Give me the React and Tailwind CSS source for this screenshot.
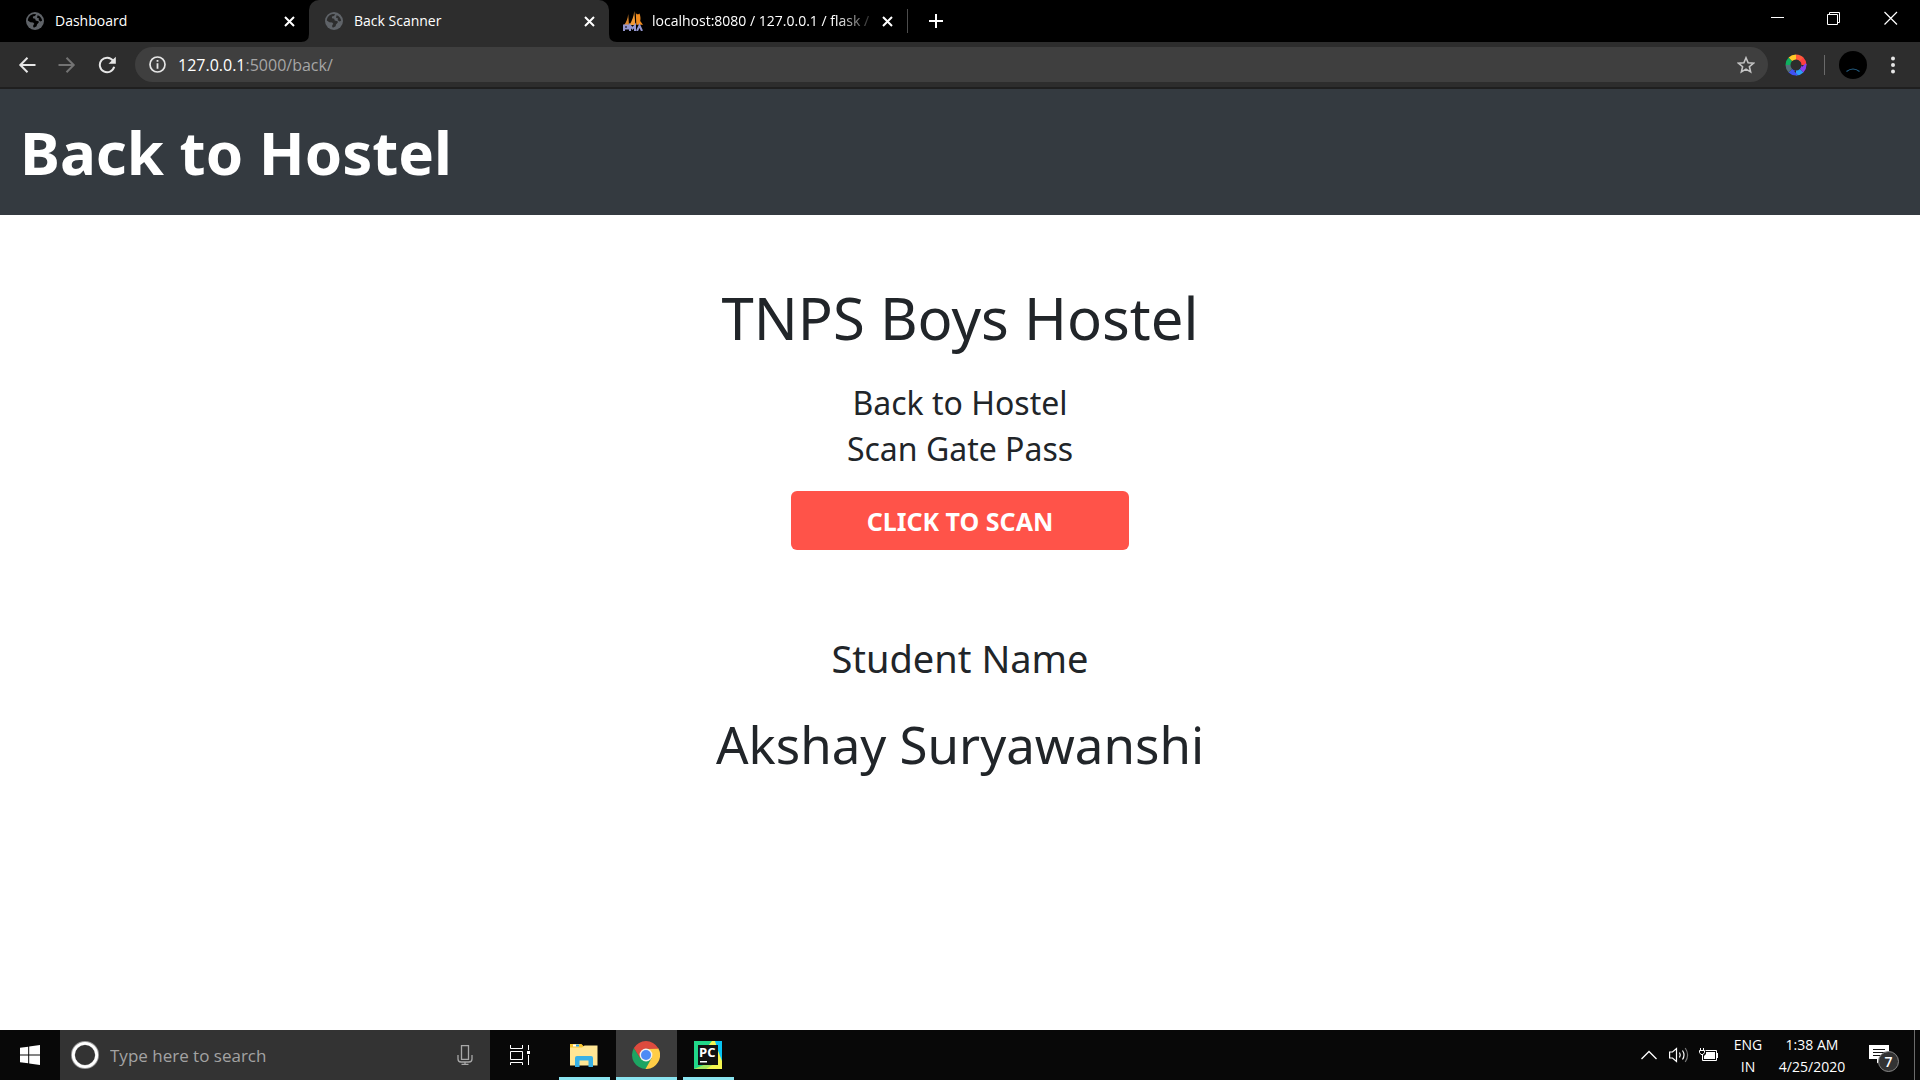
import React from "react";

const uiFont = "font-['Open_Sans','Noto_Sans',sans-serif]";

function Globe({ land }) {
  return (
    <svg className="size-[18px] shrink-0" viewBox="0 0 18 18" aria-hidden="true">
      <circle cx="9" cy="9" r="9" fill="#5f6368" />
      <path d="M1.8 8.6C2 5 4.6 2.3 8 1.9L10.2 2.2 9 3.9 6.9 4.6 7 6.2 9.2 6.7 9.7 8.6 12.6 9.2 12.8 10.6 11 12.4 10.6 14.2 8.4 15.4 7.2 15.2 7.3 13 8.4 12 7.2 10.4 4.4 10.2Z" fill={land} />
      <path d="M11.6 3.2C14.2 4 15.9 6.2 16.1 8.8L14.4 9.6 12.6 7.9 13.1 6.6 11 5.8Z" fill={land} />
    </svg>
  );
}

function Sails() {
  return (
    <svg className="size-5 shrink-0" viewBox="0 0 20 20" aria-hidden="true">
      <path d="M5.200 3 6 14H1C3.500 11 4.800 7.500 5.200 3Z" fill="#d9842b" />
      <path d="M11.300 0 12.300 14H6.300C9 10 10.800 5.500 11.300 0Z" fill="#f29a35" />
      <path d="M12.800 1.500C13.500 3.500 14.500 4 16.500 2.500 17.500 5 17.800 8 17.200 10L20 13.800H13.300Z" fill="#f08a1c" />
      <path d="M1 20V14.500H5V17.500H1.500M7 20V14.500L9.500 17.500 12 14.500V20M14 20 16.500 14.500 19 20" fill="none" stroke="#9396cf" strokeWidth="2" />
    </svg>
  );
}

function CloseButton({ label }) {
  return (
    <button aria-label={label} className="flex size-5 shrink-0 items-center justify-center">
      <svg className="size-[11px]" viewBox="0 0 11 11" aria-hidden="true">
        <path d="M1 1 10 10M10 1 1 10" stroke="#fff" strokeWidth="2" />
      </svg>
    </button>
  );
}

function Tab({ icon, title, active, fade }) {
  return (
    <div
      className={`relative flex h-full min-w-0 flex-1 items-center pr-[10px] ${fade ? "max-w-[298px]" : "max-w-[300px]"} ${active ? "rounded-t-[10px] bg-[#2d2d2d] pl-4" : "pl-[14px]"}`}
    >
      {active && (
        <>
          <svg className="absolute -left-2 bottom-0 size-2" viewBox="0 0 8 8" aria-hidden="true"><path d="M8 0V8H0Q8 8 8 0Z" fill="#2d2d2d" /></svg>
          <svg className="absolute -right-2 bottom-0 size-2" viewBox="0 0 8 8" aria-hidden="true"><path d="M0 0V8H8Q0 8 0 0Z" fill="#2d2d2d" /></svg>
        </>
      )}
      {icon}
      <span
        className={`min-w-0 flex-1 overflow-hidden whitespace-nowrap text-[14px] leading-5 text-white ${fade ? "ml-[9px] [mask-image:linear-gradient(to_right,#000_82%,transparent)]" : "ml-[11px]"}`}
      >
        {title}
      </span>
      <CloseButton label={`Close ${title}`} />
    </div>
  );
}

function TabStrip() {
  return (
    <div className="flex h-[42px] justify-between bg-black">
      <div className="flex min-w-0 flex-1 items-center pl-[9px]">
        <Tab icon={<span className="ml-[3px] flex"><Globe land="#000" /></span>} title="Dashboard" />
        <Tab icon={<Globe land="#2d2d2d" />} title="Back Scanner" active />
        <Tab icon={<Sails />} title="localhost:8080 / 127.0.0.1 / flask /" fade />
        <span className="h-6 w-px bg-[#4c4c4c]" />
        <button aria-label="New tab" className="ml-5 flex size-4 items-center justify-center">
          <svg className="size-4" viewBox="0 0 16 16" aria-hidden="true">
            <path d="M8 1V15M1 8H15" stroke="#fff" strokeWidth="2" />
          </svg>
        </button>
      </div>
      <div className="flex h-9">
        <button aria-label="Minimize" className="flex w-14 items-center justify-center">
          <svg className="size-[14px]" viewBox="0 0 14 14" aria-hidden="true"><path d="M0 6.500H13" stroke="#fff" /></svg>
        </button>
        <button aria-label="Restore" className="flex w-14 items-center justify-center">
          <svg className="size-[14px]" viewBox="0 0 14 14" aria-hidden="true">
            <path d="M.5 3.500H10.500V13.500H.5ZM2.500 3.500V1.500H12.500V11.500H10.500" fill="none" stroke="#fff" />
          </svg>
        </button>
        <button aria-label="Close window" className="flex w-[58px] items-center justify-center">
          <svg className="size-[14px]" viewBox="0 0 14 14" aria-hidden="true"><path d="M.5 1 13 13.500M13 1 .5 13.500" stroke="#fff" strokeWidth="1.200" /></svg>
        </button>
      </div>
    </div>
  );
}

function Toolbar() {
  return (
    <div className="flex h-[47px] items-center border-b-2 border-[#1f1f1f] bg-[#2d2d2d] pl-[18px] pr-[25px]">
      <button aria-label="Back" className="flex size-[18px] items-center justify-center">
        <svg className="size-[18px]" viewBox="0 0 18 18" aria-hidden="true"><path d="M17.500 9H2.500M9.500 1.800 2.300 9 9.500 16.200" fill="none" stroke="#e6e6e6" strokeWidth="2" /></svg>
      </button>
      <button aria-label="Forward" className="ml-[22px] flex size-[18px] items-center justify-center">
        <svg className="size-[18px]" viewBox="0 0 18 18" aria-hidden="true"><path d="M.5 9H15.500M8.500 1.800 15.700 9 8.500 16.200" fill="none" stroke="#737373" strokeWidth="2" /></svg>
      </button>
      <button aria-label="Reload" className="ml-[22px] flex size-[18px] items-center justify-center">
        <svg className="size-[18px]" viewBox="0 0 18 18" aria-hidden="true">
          <path d="M15 4.600A7.300 7.300 0 1 0 16.200 10.800" fill="none" stroke="#e6e6e6" strokeWidth="2" />
          <path d="M17.800.8V7.800H10.500Z" fill="#e6e6e6" />
        </svg>
      </button>
      <div className="ml-[19px] flex h-[35px] flex-1 items-center rounded-full bg-[#3f3f3f] pl-[14px] pr-[13px]">
        <svg className="size-[17px] shrink-0" viewBox="0 0 17 17" aria-hidden="true">
          <circle cx="8.500" cy="8.500" r="7.500" fill="none" stroke="#e6e6e6" strokeWidth="1.700" />
          <path d="M8.500 4V5.800M8.500 7.200V12.800" stroke="#e6e6e6" strokeWidth="1.800" />
        </svg>
        <a href="#address" className="ml-3 flex-1 text-[16px] leading-6 text-[#a6a6a6]">
          <span className="text-white">127.0.0.1</span>:5000/back/
        </a>
        <button aria-label="Bookmark this page" className="flex">
          <svg className="size-[18px]" viewBox="0 0 18 18" aria-hidden="true">
            <path d="M9 1.800 11.100 6.700 16.500 7.200 12.400 10.700 13.600 15.900 9 13.100 4.400 15.900 5.600 10.700 1.500 7.200 6.900 6.700Z" fill="none" stroke="#c4c4c4" strokeWidth="1.600" />
          </svg>
        </button>
      </div>
      <button aria-label="Colour picker extension" className="ml-4 flex">
        <svg className="size-6" viewBox="0 0 24 24" aria-hidden="true">
          <g fill="none" strokeWidth="5" transform="rotate(-90 12 12)">
            <circle cx="12" cy="12" r="8" stroke="#ff5a3c" pathLength="80" strokeDasharray="11 69" />
            <circle cx="12" cy="12" r="8" stroke="#ff4040" pathLength="80" strokeDasharray="10 70" strokeDashoffset="-10" />
            <circle cx="12" cy="12" r="8" stroke="#8a3ff0" pathLength="80" strokeDasharray="10 70" strokeDashoffset="-20" />
            <circle cx="12" cy="12" r="8" stroke="#2e9df7" pathLength="80" strokeDasharray="10 70" strokeDashoffset="-30" />
            <circle cx="12" cy="12" r="8" stroke="#3f51f5" pathLength="80" strokeDasharray="10 70" strokeDashoffset="-40" />
            <circle cx="12" cy="12" r="8" stroke="#546e7a" pathLength="80" strokeDasharray="10 70" strokeDashoffset="-50" />
            <circle cx="12" cy="12" r="8" stroke="#0faf5f" pathLength="80" strokeDasharray="10 70" strokeDashoffset="-60" />
            <circle cx="12" cy="12" r="8" stroke="#ffc928" pathLength="80" strokeDasharray="10 70" strokeDashoffset="-70" />
          </g>
        </svg>
      </button>
      <span className="ml-4 h-5 w-px bg-[#6a6a6a]" />
      <button aria-label="Profile" className="ml-[14px] flex">
        <svg className="size-7" viewBox="0 0 28 28" aria-hidden="true">
          <circle cx="14" cy="14" r="14" fill="#000" />
          <path d="M7.500 20.500Q14 15.500 20.500 20.500" fill="none" stroke="#245f85" strokeWidth="1.200" />
        </svg>
      </button>
      <button aria-label="Menu" className="ml-6 flex">
        <svg className="h-[18px] w-1" viewBox="0 0 4 18" fill="#e6e6e6" aria-hidden="true">
          <circle cx="2" cy="2.500" r="2" /><circle cx="2" cy="9" r="2" /><circle cx="2" cy="15.500" r="2" />
        </svg>
      </button>
    </div>
  );
}

function Page() {
  return (
    <div className="flex flex-1 flex-col bg-white font-['Noto_Sans',sans-serif] text-[#212529]">
      <header className="flex h-[126px] items-center bg-[#343a40] px-5">
        <h1 className="text-[60px] font-bold leading-[72px] text-white">Back to Hostel</h1>
      </header>
      <main className="flex flex-col items-center pt-[67px]">
        <h2 className="text-[58px] leading-[72px]">TNPS Boys Hostel</h2>
        <p className="mt-[26px] text-[32px] leading-[46px]">Back to Hostel</p>
        <p className="text-[32px] leading-[46px]">Scan Gate Pass</p>
        <button className="mt-[19px] h-[59px] w-[338px] rounded-md bg-[#ff5349] text-[25px] font-bold leading-8 text-white">CLICK TO SCAN</button>
        <h3 className="mt-[83px] text-[38px] leading-[50px]">Student Name</h3>
        <p className="mt-7 text-[51px] leading-[66px]">Akshay Suryawanshi</p>
      </main>
    </div>
  );
}

function FolderIcon() {
  return (
    <svg className="h-6 w-7" viewBox="0 0 28 24" aria-hidden="true">
      <path d="M0 1H11.500L14 3.500H27V22H0Z" fill="#f7c52e" />
      <path d="M3 1.500H9V3.500H3Z" fill="#fff" /><path d="M6 1.500H9V3.500H6Z" fill="#2e9fd8" />
      <path d="M0 4.500H12L14.500 2.500H27.500V22.500H0Z" fill="#ffe694" />
      <path d="M5 24V15Q5 13 7 13H21Q23 13 23 15V24H18.500V17.500H9.500V24Z" fill="#38b1e6" />
    </svg>
  );
}

function ChromeIcon() {
  return (
    <svg className="size-7" viewBox="0 0 28 28" aria-hidden="true">
      <path d="M1.880 7A14 14 0 0 0 14 28L19.600 17.200 14 14 8.400 17.200Z" fill="#1da462" />
      <path d="M26.120 7A14 14 0 0 1 13.500 28L19.500 17.300 14 14V7.700Z" fill="#ffcd46" />
      <path d="M1.880 7A14 14 0 0 1 26.120 7L26.500 7.700H14L8.400 17.500Z" fill="#dd4b3e" />
      <circle cx="14" cy="14" r="6.400" fill="#f1f1f1" />
      <circle cx="14" cy="14" r="5" fill="#4c8bf5" />
    </svg>
  );
}

function PyCharmIcon() {
  return (
    <svg className="size-7" viewBox="0 0 28 28" aria-hidden="true">
      <path d="M0 0H28V28H0Z" fill="#21d789" />
      <path d="M0 28 12 23H24L28 17V28Z" fill="#a5e85c" />
      <path d="M14 5 18 0H24L28 17V28H12L20 23Z" fill="#f4f550" />
      <path d="M21 0H28V20L23 7Z" fill="#07c3f2" />
      <path d="M4 4H24V24H4Z" fill="#111" />
      <text x="5" y="15.500" fill="#fff" fontFamily="Open Sans, sans-serif" fontSize="13" fontWeight="700">PC</text>
      <path d="M6 20H13V21.500H6Z" fill="#fff" />
    </svg>
  );
}

function TaskButton({ label, active, children }) {
  return (
    <button
      aria-label={label}
      className={`flex items-center justify-center border-b-[3px] border-[#8ae4f0] pr-[2px] pt-[2px] ${active ? "w-[61px] bg-[#3c3c3c]" : "w-[51px]"}`}
    >
      {children}
    </button>
  );
}

function Taskbar() {
  return (
    <footer className="flex h-[50px] items-stretch justify-between bg-[#080808]">
      <div className="flex">
        <button aria-label="Start" className="flex w-[60px] items-center justify-center">
          <svg className="size-5" viewBox="0 0 20 20" fill="#fff" aria-hidden="true">
            <path d="M0 2.800 8.200 1.700V9.500H0ZM9.200 1.500 20 0V9.500H9.200ZM0 10.500H8.200V18.300L0 17.200ZM9.200 10.500H20V20L9.200 18.500Z" />
          </svg>
        </button>
        <label className="flex w-[430px] items-center bg-[#333] pl-[11px] pr-[17px]">
          <svg className="size-7 shrink-0" viewBox="0 0 28 28" aria-hidden="true">
            <circle cx="14" cy="14" r="12" fill="none" stroke="#999" strokeWidth="4" />
            <circle cx="14" cy="14" r="11.700" fill="none" stroke="#fff" strokeWidth="2.800" />
          </svg>
          <input aria-label="Type here to search" placeholder="Type here to search" className="ml-[11px] min-w-0 flex-1 bg-transparent pt-px text-[17px] leading-6 outline-none placeholder:text-[#a3a3a3]" />
          <svg className="h-5 w-4" viewBox="0 0 16 20" fill="none" stroke="#a8a8a8" strokeWidth="1.300" aria-hidden="true">
            <path d="M4.500 .7H11.500V14.300H4.500ZM1 10V14Q1 17 4 17H12Q15 17 15 14V10M8 17V19.300M4.500 19.300H11.500" />
          </svg>
        </label>
        <button aria-label="Task View" className="flex w-[60px] items-center justify-center">
          <svg className="h-5 w-[21px]" viewBox="0 0 21 20" fill="none" stroke="#fff" aria-hidden="true">
            <path d="M.5 0V3.500H12.500V0M.5 6.500H12.500V14.500H.5ZM.5 20V17.500H12.500V20M18.500 0V5M18.500 10V20" />
            <path d="M17 6H20V9H17Z" fill="#fff" stroke="none" />
          </svg>
        </button>
        <div className="flex gap-[6px] pl-[9px]">
          <TaskButton label="File Explorer"><FolderIcon /></TaskButton>
          <TaskButton label="Google Chrome" active><ChromeIcon /></TaskButton>
          <TaskButton label="PyCharm"><PyCharmIcon /></TaskButton>
        </div>
      </div>
      <div className="flex items-center text-center text-[14px] leading-[22px] text-white">
        <button aria-label="Show hidden icons">
          <svg className="h-[10px] w-4" viewBox="0 0 16 10" aria-hidden="true"><path d="M.5 9 8 1.500 15.500 9" fill="none" stroke="#fff" strokeWidth="1.300" /></svg>
        </button>
        <button aria-label="Volume" className="ml-3">
          <svg className="h-[18px] w-5" viewBox="0 0 20 18" fill="none" stroke="#fff" strokeWidth="1.200" aria-hidden="true">
            <path d="M.6 6H3.500L7.500 2.500V15.500L3.500 12H.6ZM10.500 6.500Q12 9 10.500 11.500M13.500 4.500Q16.500 9 13.500 13.500" />
            <path d="M16.200 2Q21 9 16.200 16" stroke="#777" />
          </svg>
        </button>
        <button aria-label="Battery" className="ml-[10px]">
          <svg className="h-[14px] w-5" viewBox="0 0 20 14" fill="none" stroke="#fff" aria-hidden="true">
            <path d="M6.500 2.500H17.500V12.500H3.500V8M18.500 5V10M1.500 0V2.500M4.500 0V2.500M.5 2.500H5.500V4.500L4 6.500H2L.5 4.500ZM3.500 6.500V9" />
            <path d="M7 4H16V11H5V8L7 6Z" fill="#fff" stroke="none" />
          </svg>
        </button>
        <div className="w-[54px] pl-1 pt-px"><p>ENG</p><p>IN</p></div>
        <div className="w-[78px] pt-px"><p>1:38 AM</p><p>4/25/2020</p></div>
        <button aria-label="7 notifications" className="ml-[18px] flex">
          <svg className="h-[34px] w-[30px]" viewBox="0 0 30 34" aria-hidden="true">
            <path d="M0 7H20V21H13L8 25.500V21H0Z" fill="#fff" />
            <path d="M4 11.500H16M4 14.500H16M4 17.500H12" stroke="#111" />
            <circle cx="19.500" cy="23.500" r="10" fill="#333" stroke="#888" />
            <text x="19.500" y="28.500" textAnchor="middle" fill="#fff" fontFamily="Open Sans, sans-serif" fontSize="14" fontWeight="600">7</text>
          </svg>
        </button>
        <button aria-label="Show desktop" className="ml-[15px] h-full w-[6px] border-l border-[#6b6b6b]" />
      </div>
    </footer>
  );
}

export default function App() {
  return (
    <div className={`flex min-h-screen flex-col ${uiFont}`}>
      <TabStrip />
      <Toolbar />
      <Page />
      <Taskbar />
    </div>
  );
}
